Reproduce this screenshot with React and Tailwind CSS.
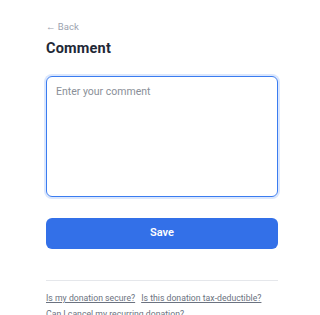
import React, { useState } from 'react';

export default function App() {
  const [comment, setComment] = useState('');

  return (
    <div className="min-h-[315px] bg-white pl-[46px] pt-[21px]" style={{ fontFamily: 'Roboto, "Noto Sans", sans-serif' }}>
      <div className="w-[232px]">
        <a href="#" className="block text-[9.5px] leading-[12px] text-[#9ca3af]">← Back</a>
        <h1 className="mt-[7px] text-[14.5px] font-bold leading-[18px] tracking-[0.2px] text-[#1f2937]">Comment</h1>
        <textarea
          autoFocus
          className="mt-[18px] block h-[121px] w-full resize-none rounded-[6px] border-[1.5px] border-[#3b7cf0] px-[9px] py-[8px] text-[10.5px] leading-[14px] text-[#374151] outline-none ring-2 ring-[#dbe7fd] placeholder:text-[#8a8f98]"
          placeholder="Enter your comment"
          value={comment}
          onChange={(e) => setComment(e.target.value)}
        />
        <button className="mt-[21px] flex h-[31px] w-full items-center justify-center rounded-[6px] bg-[#3370e8] text-[11px] font-semibold text-white">
          Save
        </button>
        <div className="mt-[31px] border-t border-[#e5e7eb]" />
        <div className="mt-[11px] flex flex-wrap gap-x-[6px] gap-y-[3px] text-[8.7px] leading-[13px] text-[#6b7280]">
          <a href="#" className="underline">Is my donation secure?</a>
          <a href="#" className="underline">Is this donation tax-deductible?</a>
          <a href="#" className="underline">Can I cancel my recurring donation?</a>
        </div>
      </div>
    </div>
  );
}
